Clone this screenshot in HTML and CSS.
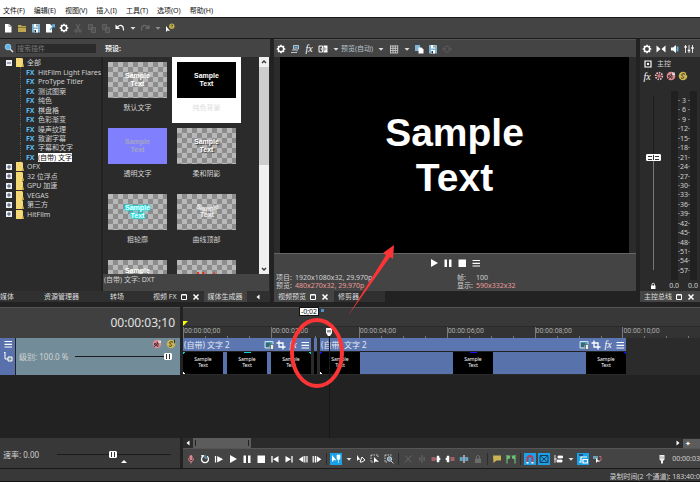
FILE: index.html
```html
<!DOCTYPE html>
<html lang="zh-CN">
<head>
    <meta charset="UTF-8">
    <meta name="viewport" content="width=device-width, initial-scale=1.0">
    <title>视频编辑</title>
    <link rel="stylesheet" href="styles.css">
</head>
<body>
    <svg class="sprite" aria-hidden="true">
        <symbol id="new" viewBox="0 0 10 10"><path d="M2 1h4l2.500 2.500V9.500H2z" fill="#fff"/><path d="M6 1v2.500h2.500" fill="none" stroke="#888" stroke-width=".7"/></symbol>
        <symbol id="open" viewBox="0 0 10 10"><path d="M1 2h3l1 1h4v6H1z" fill="#bfa650"/><path d="M1 4.500h8" stroke="#7d6b2d" stroke-width=".8"/></symbol>
        <symbol id="save" viewBox="0 0 10 10"><path d="M1 1h8v8.500H1z" fill="#7fb6d6"/><path d="M3 1h4v3.500H3zM3 6h4v3.500H3z" fill="#fff"/><path d="M5.500 1.500h1v2h-1zM3.500 7h1.500v2.500H3.500z" fill="#333"/></symbol>
        <symbol id="render" viewBox="0 0 10 10"><path d="M1 1h4l2 2v6.500H1z" fill="#fff"/><path d="M5 7l4-5M7 2h2.500v2.500" stroke="#62b5e5" stroke-width="1.300" fill="none"/></symbol>
        <symbol id="gear" viewBox="0 0 10 10"><circle cx="5" cy="5" r="2.700" fill="none" stroke="#fff" stroke-width="1.500"/><path d="M5 .7v1.600M5 7.700v1.600M.7 5h1.600M7.700 5h1.600M2 2l1 1M7 7l1 1M8 2L7 3M3 7L2 8" stroke="#fff" stroke-width="1.500"/></symbol>
        <symbol id="cut" viewBox="0 0 10 10"><path d="M3 1l3.500 6M7 1L3.500 7" stroke="#666" fill="none"/><circle cx="3" cy="8" r="1.200" fill="none" stroke="#666"/><circle cx="7" cy="8" r="1.200" fill="none" stroke="#666"/></symbol>
        <symbol id="copy-dim" viewBox="0 0 10 10"><path d="M1.500 1.500h4v5h-4zM4.500 4.500h4v5h-4z" fill="#505050" stroke="#666" stroke-width=".8"/></symbol>
        <symbol id="copy" viewBox="0 0 10 10"><path d="M1 1h5v6H1z" fill="#7fb6d6"/><path d="M4.500 3.500h3L9.500 5.500v4h-5z" fill="#fff"/></symbol>
        <symbol id="undo" viewBox="0 0 10 10"><path d="M2.500 4c3-3 6-1.500 6 2.500v1" fill="none" stroke="#fff" stroke-width="1.200"/><path d="M.5 1.500V6H5z" fill="#fff"/></symbol>
        <symbol id="redo" viewBox="0 0 10 10"><path d="M7.500 4c-3-3-6-1.500-6 2.500v1" fill="none" stroke="#6a6a6a" stroke-width="1.200"/><path d="M9.500 1.500V6H5z" fill="#6a6a6a"/></symbol>
        <symbol id="caret" viewBox="0 0 10 10"><path d="M2.500 4h5L5 6.800z" fill="#ddd"/></symbol>
        <symbol id="help" viewBox="0 0 10 10"><path d="M1 3v6l1.500-1.500L5 8z" fill="#fff"/><circle cx="6.800" cy="3.200" r="2.700" fill="#c6b04f"/><path d="M6 2.600c.2-1.200 1.800-.9 1.600.1-.1.600-.8.500-.8 1.100M6.800 4.500v.6" stroke="#333" stroke-width=".7" fill="none"/></symbol>
        <symbol id="search" viewBox="0 0 10 10"><path d="M5.800 5.800L9 9" stroke="#ddd" stroke-width="1.500"/><circle cx="4" cy="4" r="2.900" fill="#62b5e5" stroke="#9fd4f2" stroke-width=".8"/></symbol>
        <symbol id="output" viewBox="0 0 10 10"><path d="M3.500 1.500h5v3.500h-5zM2 6h4M1 8.500h6M7 5.500v2" fill="none" stroke="#b9c9d4"/><path d="M4.500 2.500h3v1.500h-3z" fill="#62b5e5"/></symbol>
        <symbol id="split" viewBox="0 0 10 10"><path d="M1 2h3.500v6H1z" fill="none" stroke="#fff"/><path d="M5.500 1.500H9.500v7h-4z" fill="#fff"/><path d="M2 5l2-1.500v3zM8.500 5l-2-1.500v3z" fill="#fff" stroke="#333" stroke-width=".4"/></symbol>
        <symbol id="grid" viewBox="0 0 10 10"><path d="M1 2h8M1 4.300h8M1 6.600h8M1 9h8M1.500 1.500V9M4 1.500V9M6.300 1.500V9M8.700 1.500V9" stroke="#ccc" stroke-width=".9"/></symbol>
        <symbol id="sync-dim" viewBox="0 0 10 10"><path d="M2 5c0-4 6-4 6 0M8 5c0 4-6 4-6 0M0 5h4M6 5h4" fill="none" stroke="#5c5c5c"/></symbol>
        <symbol id="play" viewBox="0 0 10 10"><path d="M2 1v8l7-4z" fill="#fff"/></symbol>
        <symbol id="pause" viewBox="0 0 10 10"><path d="M1.500 1.500h2.500v7.500H1.500zM6 1.500h2.500v7.500H6z" fill="#fff"/></symbol>
        <symbol id="stop" viewBox="0 0 10 10"><path d="M1.500 1.500H9V9H1.500z" fill="#fff"/></symbol>
        <symbol id="menu" viewBox="0 0 10 10"><path d="M1.500 2.500h7.500M1.500 5.300h7.500M1.500 8h7.500" stroke="#fff" stroke-width="1.200"/></symbol>
        <symbol id="bowtie" viewBox="0 0 10 10"><path d="M.5 1.500L4.500 5l-4 3.500zM9.500 1.500L5.500 5l4 3.500z" fill="#fff"/></symbol>
        <symbol id="speaker" viewBox="0 0 10 10"><path d="M1 3.500h2L6 1v8L3 6.500H1z" fill="#fff"/><path d="M7.500 2.500v5" stroke="#62b5e5" stroke-width="1.800"/></symbol>
        <symbol id="mixer" viewBox="0 0 10 10"><path d="M1.500 1v8M5 1v8M8.500 1v8" stroke="#ddd"/><path d="M.3 3h2.500M3.700 6.500h2.600M7.200 4h2.500" stroke="#fff" stroke-width="1.500"/></symbol>
        <symbol id="bus" viewBox="0 0 10 10"><path d="M2 2h6v6H2z" fill="none" stroke="#fff" stroke-width="1.200"/><path d="M4 4h2v2H4z" fill="#fff"/></symbol>
        <symbol id="auto" viewBox="0 0 10 10"><circle cx="5" cy="5" r="3.300" fill="none" stroke="#e8b6bb" stroke-width="1.800" stroke-dasharray="1.500 1"/><circle cx="5" cy="5" r="1.800" fill="#d5727b"/></symbol>
        <symbol id="mute" viewBox="0 0 10 10"><circle cx="5" cy="5" r="4.300" fill="#dd8a92"/><path d="M2.500 4.500h1.500l2-2v5l-2-1.500H2.500zM2 8L8 2" stroke="#402b2d" fill="none" stroke-width=".9"/><path d="M6 1.500h3v2.500H6z" fill="#fff" opacity=".7"/></symbol>
        <symbol id="solo" viewBox="0 0 10 10"><circle cx="5" cy="5" r="4.300" fill="#c9b355"/><path d="M7 3.500C5 1.500 2.500 3.500 4.500 5S5.500 8 3 7M8.500.8v3.500" stroke="#3e381d" fill="none"/></symbol>
        <symbol id="lock" viewBox="0 0 10 10"><path d="M3 4.500h4.500V8H3z" fill="#fff"/><path d="M4 5V3.500a1.200 1.200 0 0 1 2.500 0V5" fill="none" stroke="#fff" stroke-width=".8"/></symbol>
        <symbol id="restore" viewBox="0 0 10 10"><path d="M2.500 3h5v4.500h-5zM2.500 2.500h5" fill="none" stroke="#fff"/></symbol>
        <symbol id="close" viewBox="0 0 10 10"><path d="M2.500 2.500l5 5M7.500 2.500l-5 5" stroke="#fff" stroke-width="1.500"/></symbol>
        <symbol id="left" viewBox="0 0 10 10"><path d="M6.500 2.500v5L3.500 5z" fill="#fff"/></symbol>
        <symbol id="right" viewBox="0 0 10 10"><path d="M3.500 2.500v5l3-2.500z" fill="#fff"/></symbol>
        <symbol id="folder" viewBox="0 0 8 9"><path d="M0 0h6l1 1v5l1 3H0z" fill="#f5d876"/><path d="M7 5l1 4H6z" fill="#c09a34"/></symbol>
        <symbol id="plus" viewBox="0 0 6 6"><path d="M0 0h6v6H0z" fill="#eee"/><path d="M1 3h4M3 1v4" stroke="#34437c" stroke-width=".9"/></symbol>
        <symbol id="minus" viewBox="0 0 6 6"><path d="M0 0h6v6H0z" fill="#eee"/><path d="M1 3h4" stroke="#34437c" stroke-width=".9"/></symbol>
        <symbol id="make-child" viewBox="0 0 10 10"><path d="M2 0v5M1 1l1-1M2 7h3M2 5v2" fill="none" stroke="#fff"/><path d="M5 5h4v4H5z" fill="#748f9b" stroke="#fff"/></symbol>
        <symbol id="media" viewBox="0 0 10 10"><path d="M1 1.500h8v6.500H1z" fill="#4d9aa8" stroke="#cde"/><path d="M2 4h4M2 6h3" stroke="#234"/><path d="M6.500 4.500h3v5h-3z" fill="#eee" stroke="#333" stroke-width=".5"/></symbol>
        <symbol id="crop" viewBox="0 0 10 10"><path d="M3 .5V7h6.500M.5 3H7v6.500" fill="none" stroke="#fff" stroke-width="1.300"/></symbol>
        <symbol id="mic" viewBox="0 0 10 10"><rect x="3.500" y="1" width="3" height="5" rx="1.500" fill="#e2868e"/><path d="M2.500 4.500c0 4 5 4 5 0M5 7.500v2" stroke="#e2868e" fill="none"/></symbol>
        <symbol id="loop" viewBox="0 0 10 10"><path d="M3 2.300a3.500 3.500 0 1 0 4 0" fill="none" stroke="#fff" stroke-width="1.300"/><path d="M1 1l3.500.3L2.500 4z" fill="#fff"/><path d="M5 1v3h2.500" stroke="#62b5e5" fill="none"/></symbol>
        <symbol id="play-start" viewBox="0 0 10 10"><path d="M1.500 2v6.500" stroke="#fff" stroke-width="1.200"/><path d="M3.800 3v4.500l4-2.200z" stroke="#fff" stroke-width="1.200" fill="#fff"/></symbol>
        <symbol id="to-start" viewBox="0 0 10 10"><path d="M2 2v6.500" stroke="#fff" stroke-width="1.300"/><path d="M8.500 2v6.500L3 5.200z" fill="#fff"/></symbol>
        <symbol id="to-end" viewBox="0 0 10 10"><path d="M8 2v6.500" stroke="#fff" stroke-width="1.300"/><path d="M1.500 2v6.500L7 5.200z" fill="#fff"/></symbol>
        <symbol id="step-back" viewBox="0 0 10 10"><path d="M6.800 2v6.500M9 2v6.500" stroke="#fff" stroke-width="1.200"/><path d="M5.500 2v6.500L.8 5.200z" fill="#fff"/></symbol>
        <symbol id="step-next" viewBox="0 0 10 10"><path d="M1.200 2v6.500M3.400 2v6.500" stroke="#fff" stroke-width="1.200"/><path d="M4.700 2v6.500l4.700-3.300z" fill="#fff"/></symbol>
        <symbol id="edit-tool" viewBox="0 0 10 10"><path d="M1 1v7l2-2 2.500.5z" fill="#fff"/><path d="M6 1h3v4L7.500 6 6 5zM7.500 6v3" fill="#fff" stroke="#fff" stroke-width=".6"/></symbol>
        <symbol id="env-tool" viewBox="0 0 10 10"><path d="M1 1v6l1.500-1.500 2 .5z" fill="#fff"/><path d="M4 8l2-5 3 3-3 2z" fill="none" stroke="#fff"/></symbol>
        <symbol id="select-tool" viewBox="0 0 10 10"><path d="M1 1h7v3M1 1v7h3" fill="none" stroke="#ccc" stroke-dasharray="1.500 1"/><path d="M4 3v6l1.500-1.500L9 8z" fill="#fff"/></symbol>
        <symbol id="zoom-tool" viewBox="0 0 10 10"><path d="M1 1h7M1 1v7h3" fill="none" stroke="#ccc" stroke-dasharray="1.500 1"/><circle cx="5.500" cy="5" r="2.200" fill="#6f9cb3" stroke="#ccc"/><path d="M7 7l2.500 2.500" stroke="#ccc"/></symbol>
        <symbol id="delete-dim" viewBox="0 0 10 10"><path d="M2 1.500l6.500 7M8.500 1.500L2 8.500" stroke="#666"/></symbol>
        <symbol id="trim-dim" viewBox="0 0 10 10"><path d="M5 1v8" stroke="#666"/><path d="M2 3h1.500v4H2zM6.500 3H8v4H6.500z" fill="#5d5d5d"/></symbol>
        <symbol id="trim-start" viewBox="0 0 10 10"><path d="M.5 3h4v4h-4z" fill="#a45f67"/><path d="M6 2h2v6H6zM8 3.500L9.500 5 8 6.500M4.500 5H6" fill="#fff" stroke="#fff" stroke-width=".5"/></symbol>
        <symbol id="trim-end" viewBox="0 0 10 10"><path d="M5.500 3h4v4h-4z" fill="#a45f67"/><path d="M2 2h2v6H2zM2 3.500L.5 5 2 6.500" fill="#fff" stroke="#fff" stroke-width=".5"/></symbol>
        <symbol id="split-clip" viewBox="0 0 10 10"><path d="M5 1v8" stroke="#fff"/><path d="M.8 3h3v4h-3zM6.200 3h3v4h-3z" fill="#62a5cc"/></symbol>
        <symbol id="lock-dim" viewBox="0 0 10 10"><path d="M2 4.500h6V9H2z" fill="#6c6c6c"/><path d="M3.500 5V3a1.500 1.500 0 0 1 3 0v2" fill="none" stroke="#6c6c6c"/></symbol>
        <symbol id="marker" viewBox="0 0 10 10"><path d="M1 1.500h8v5H4.500L1.500 9z" fill="#c9b355"/></symbol>
        <symbol id="region" viewBox="0 0 10 10"><path d="M1 1v8.500M9 1v8.500" stroke="#6dbf75" stroke-width="1.200"/><path d="M1 1.500h3.500L3.500 5H1zM9 1.500H5.500L6.500 5H9z" fill="#6dbf75"/></symbol>
        <symbol id="magnet" viewBox="0 0 10 10"><path d="M2.500 9V4.500a2.500 2.500 0 0 1 5 0V9" fill="none" stroke="#b93a55" stroke-width="2"/><path d="M1.500 8h2v1.500h-2zM6.500 8h2v1.500h-2z" fill="#fff"/></symbol>
        <symbol id="fade" viewBox="0 0 10 10"><path d="M1 1.500h8v7H1zM1 1.500l8 7M9 1.500l-8 7" fill="none" stroke="#17395a"/></symbol>
        <symbol id="ripple" viewBox="0 0 10 10"><path d="M2 1v8M1 5h3M5 2h4.500v2H5zM4 6h5v2H4z" fill="#fff" stroke="#fff" stroke-width=".8"/></symbol>
        <symbol id="envelope" viewBox="0 0 10 10"><path d="M1 8h2V3h6M5 5.500h4.500v3.500H5z" fill="none" stroke="#fff" stroke-width="1.200"/><path d="M1 1h4" stroke="#223" stroke-width="1.200"/></symbol>
        <symbol id="group" viewBox="0 0 10 10"><path d="M1 2h5v3H1z" fill="#6f9cb3"/><path d="M4 4v5l1.500-1.500L8 8z" fill="#fff"/><path d="M7 2.500h2v4H7" fill="none" stroke="#c06771"/></symbol>
        <symbol id="pin" viewBox="0 0 10 10"><path d="M2.500 1h5v4.500L6 7v2.500H4V7L2.500 5.500z" fill="#eee"/><path d="M4 2.500v2M6 2.500v2" stroke="#555" stroke-width=".6"/></symbol>
    </svg>

    <nav class="menubar">
        <button>文件(F)</button>
        <button>编辑(E)</button>
        <button>视图(V)</button>
        <button>插入(I)</button>
        <button>工具(T)</button>
        <button>选项(O)</button>
        <button>帮助(H)</button>
    </nav>

    <div class="toolbar main-toolbar">
        <button aria-label="新建"><svg><use href="#new"/></svg></button>
        <button aria-label="打开"><svg><use href="#open"/></svg></button>
        <button aria-label="保存"><svg><use href="#save"/></svg></button>
        <button aria-label="渲染"><svg><use href="#render"/></svg></button>
        <button aria-label="属性"><svg><use href="#gear"/></svg></button>
        <button aria-label="剪切"><svg><use href="#cut"/></svg></button>
        <button aria-label="复制"><svg><use href="#copy-dim"/></svg></button>
        <button aria-label="粘贴"><svg><use href="#copy-dim"/></svg></button>
        <button aria-label="撤消"><svg><use href="#undo"/></svg></button>
        <button class="narrow" aria-label="撤消列表"><svg><use href="#caret"/></svg></button>
        <button aria-label="重做"><svg><use href="#redo"/></svg></button>
        <button class="narrow dim" aria-label="重做列表"><svg><use href="#caret"/></svg></button>
        <button aria-label="帮助"><svg><use href="#help"/></svg></button>
    </div>

    <main class="workspace">
        <section class="dock generators">
            <div class="panel">
                <div class="panel-head">
                    <label for="plugin-search" aria-label="搜索插件"><svg><use href="#search"/></svg></label>
                    <input id="plugin-search" type="text" placeholder="搜索插件">
                    <span class="preset-title">预设:</span>
                </div>
                <div class="browser">
                    <ul class="tree">
                        <li><svg class="expander"><use href="#minus"/></svg><svg class="folder"><use href="#folder"/></svg>全部</li>
                        <li class="child"><b>FX</b><span>HitFilm Light Flares</span></li>
                        <li class="child"><b>FX</b><span>ProType Titler</span></li>
                        <li class="child"><b>FX</b><span>测试图案</span></li>
                        <li class="child"><b>FX</b><span>纯色</span></li>
                        <li class="child"><b>FX</b><span>棋盘格</span></li>
                        <li class="child"><b>FX</b><span>色彩渐变</span></li>
                        <li class="child"><b>FX</b><span>噪声纹理</span></li>
                        <li class="child"><b>FX</b><span>致谢字幕</span></li>
                        <li class="child"><b>FX</b><span>字幕和文字</span></li>
                        <li class="child"><b>FX</b><span class="chosen">(自带) 文字</span></li>
                        <li><svg class="expander"><use href="#plus"/></svg><svg class="folder"><use href="#folder"/></svg>OFX</li>
                        <li><svg class="expander"><use href="#plus"/></svg><svg class="folder"><use href="#folder"/></svg>32 位浮点</li>
                        <li><svg class="expander"><use href="#plus"/></svg><svg class="folder"><use href="#folder"/></svg>GPU 加速</li>
                        <li><svg class="expander"><use href="#plus"/></svg><svg class="folder"><use href="#folder"/></svg>VEGAS</li>
                        <li><svg class="expander"><use href="#plus"/></svg><svg class="folder"><use href="#folder"/></svg>第三方</li>
                        <li><svg class="expander"><use href="#plus"/></svg><svg class="folder"><use href="#folder"/></svg>HitFilm</li>
                    </ul>
                    <div class="presets">
                        <div class="preset-list">
                            <div class="preset"><div class="thumb">Sample<br>Text</div>默认文字</div>
                            <div class="preset selected"><div class="thumb solid">Sample<br>Text</div>纯色背景</div>
                            <div class="preset"><div class="thumb violet">Sample<br>Text</div>透明文字</div>
                            <div class="preset"><div class="thumb shadow">Sample<br>Text</div>柔和阴影</div>
                            <div class="preset"><div class="thumb glow">Sample<br>Text</div>粗轮廓</div>
                            <div class="preset">
                                <div class="thumb">
                                    <svg class="curved" viewBox="0 0 59 36">
                                        <path id="arc" d="M15 12Q30 22 46 12" fill="none"/>
                                        <text><textPath href="#arc" startOffset="50%" text-anchor="middle">Sample</textPath></text>
                                        <text x="30" y="23" text-anchor="middle">Text</text>
                                    </svg>
                                </div>
                                曲线顶部
                            </div>
                            <div class="preset"><div class="thumb tall">Sample</div></div>
                            <div class="preset"><div class="thumb hot">Hot</div></div>
                        </div>
                        <div class="scrollbar">
                            <svg viewBox="0 0 10 10"><path d="M3 6l2-2 2 2" fill="none" stroke="#333" stroke-width="1.300"/></svg>
                            <div class="scroll-thumb"></div>
                            <svg viewBox="0 0 10 10"><path d="M3 4l2 2 2-2" fill="none" stroke="#333" stroke-width="1.300"/></svg>
                        </div>
                        <div class="preset-info">(自带) 文字: DXT</div>
                    </div>
                </div>
            </div>
            <div class="tabs full">
                <button class="tab-media"><span>媒体</span></button>
                <button class="tab-explorer">资源管理器</button>
                <button class="tab-transition">转场</button>
                <button class="tab-fx">视频 FX <svg><use href="#restore"/></svg><svg><use href="#close"/></svg></button>
                <button class="active">媒体生成器</button>
                <button class="tab-arrow" aria-label="向左"><svg><use href="#left"/></svg></button>
            </div>
        </section>

        <section class="dock preview">
            <div class="panel">
                <div class="toolbar">
                    <button aria-label="属性"><svg><use href="#gear"/></svg></button>
                    <button aria-label="外部监视器"><svg><use href="#output"/></svg></button>
                    <button class="fx" aria-label="效果">fx</button>
                    <button aria-label="拆分视图"><svg><use href="#split"/></svg></button>
                    <button class="narrow" aria-label="拆分选项"><svg><use href="#caret"/></svg></button>
                    <button class="quality">预览(自动) <svg><use href="#caret"/></svg></button>
                    <button aria-label="网格"><svg><use href="#grid"/></svg></button>
                    <button class="narrow" aria-label="网格选项"><svg><use href="#caret"/></svg></button>
                    <button aria-label="复制快照"><svg><use href="#copy"/></svg></button>
                    <button aria-label="保存快照"><svg><use href="#save"/></svg></button>
                    <button aria-label="同步"><svg><use href="#sync-dim"/></svg></button>
                </div>
                <div class="screen"><p>Sample<br>Text</p></div>
                <div class="monitor">
                    <div class="monitor-controls">
                        <button aria-label="播放"><svg><use href="#play"/></svg></button>
                        <button aria-label="暂停"><svg><use href="#pause"/></svg></button>
                        <button aria-label="停止"><svg><use href="#stop"/></svg></button>
                        <button aria-label="菜单"><svg><use href="#menu"/></svg></button>
                    </div>
                    <div class="monitor-info">
                        <span>项目:</span><span>1920x1080x32, 29.970p</span><span>帧:</span><span>100</span>
                        <span>预览:</span><span class="warn">480x270x32, 29.970p</span><span>显示:</span><span class="warn">590x332x32</span>
                    </div>
                </div>
            </div>
            <div class="tabs">
                <button class="active">视频预览 <svg><use href="#restore"/></svg><svg><use href="#close"/></svg></button>
                <button class="tab-trimmer">修剪器</button>
            </div>
        </section>

        <section class="dock master">
            <div class="panel">
                <div class="toolbar">
                    <button aria-label="属性"><svg><use href="#gear"/></svg></button>
                    <button aria-label="缩混"><svg><use href="#bowtie"/></svg></button>
                    <button aria-label="调低音量"><svg><use href="#speaker"/></svg></button>
                    <button aria-label="调音台"><svg><use href="#mixer"/></svg></button>
                </div>
                <div class="bus-name"><svg><use href="#bus"/></svg>主控</div>
                <div class="bus-tools">
                    <button class="fx" aria-label="效果">fx</button>
                    <button aria-label="自动化"><svg><use href="#auto"/></svg></button>
                    <button aria-label="静音"><svg><use href="#mute"/></svg></button>
                    <button aria-label="独奏"><svg><use href="#solo"/></svg></button>
                </div>
                <div class="meters">
                    <input class="fader" type="range" min="0" max="100" value="65" aria-label="主控音量">
                    <div class="level"></div>
                    <ol class="scale">
                        <li>3</li><li>6</li><li>9</li><li>12</li><li>15</li><li>18</li><li>21</li><li>24</li><li>27</li><li>30</li>
                        <li>33</li><li>36</li><li>39</li><li>42</li><li>45</li><li>48</li><li>51</li><li>54</li><li>57</li>
                    </ol>
                    <div class="level"></div>
                </div>
                <div class="readout"><svg><use href="#lock"/></svg><span>0.0</span><span>0.0</span></div>
            </div>
            <div class="tabs full">
                <button class="active">主控总线 <svg><use href="#restore"/></svg><svg><use href="#close"/></svg></button>
            </div>
        </section>
    </main>

    <section class="timeline">
        <div class="track-column">
            <div class="timecode">00:00:03;10</div>
            <div class="track-head">
                <div class="track-handle">
                    <svg><use href="#menu"/></svg>
                    <svg><use href="#make-child"/></svg>
                </div>
                <div class="track-body">
                    <div class="track-buttons">
                        <button aria-label="静音"><svg><use href="#mute"/></svg></button>
                        <button aria-label="独奏"><svg><use href="#solo"/></svg></button>
                    </div>
                    <div class="track-level">
                        <label for="level">级别: 100.0 %</label>
                        <input id="level" type="range" min="0" max="100" value="100">
                    </div>
                </div>
            </div>
            <div class="rate">
                <label for="rate">速率: 0.00</label>
                <input id="rate" type="range" min="0" max="100" value="49">
                <span class="rate-mark"></span>
            </div>
        </div>

        <div class="track-area">
            <div class="marker-bar"><span class="offset-tip">-0;02</span></div>
            <div class="ruler">
                <span>00:00:00;00</span>
                <span>00:00:02;00</span>
                <span>00:00:04;00</span>
                <span>00:00:06;00</span>
                <span>00:00:08;00</span>
                <span>00:00:10;00</span>
            </div>
            <div class="lane">
                <div class="clip first">
                    <div class="clip-head">
                        <span>(自带) 文字 2</span>
                        <svg><use href="#media"/></svg><svg><use href="#crop"/></svg><i class="fx">fx</i><svg><use href="#menu"/></svg>
                    </div>
                    <div class="frames"><span>Sample<br>Text</span><span>Sample<br>Text</span><span>Sample<br>Text</span></div>
                </div>
                <div class="clip sliver">
                    <div class="clip-head"></div>
                    <div class="frames"></div>
                </div>
                <div class="clip second">
                    <div class="clip-head">
                        <span>(自带) 文字 2</span>
                        <svg><use href="#media"/></svg><svg><use href="#crop"/></svg><i class="fx">fx</i><svg><use href="#menu"/></svg>
                    </div>
                    <div class="frames"><span>Sample<br>Text</span><span>Sample<br>Text</span><span>Sample<br>Text</span></div>
                </div>
            </div>
            <div class="playhead"><svg viewBox="0 0 8 10"><path d="M1 1h6v5L5 9H3L1 6z" fill="#fff"/><path d="M3 3v2.500M5 3v2.500" stroke="#333"/></svg></div>
            <div class="empty-lane"></div>
            <div class="h-scroll">
                <svg><use href="#left"/></svg>
                <div class="h-thumb"></div>
                <svg class="push"><use href="#right"/></svg>
                <div class="h-zoom">✦</div>
            </div>
            <div class="toolbar transport">
                <button aria-label="录制"><svg><use href="#mic"/></svg></button>
                <button aria-label="循环播放"><svg><use href="#loop"/></svg></button>
                <button aria-label="从头播放"><svg><use href="#play-start"/></svg></button>
                <button aria-label="播放"><svg><use href="#play"/></svg></button>
                <button aria-label="暂停"><svg><use href="#pause"/></svg></button>
                <button aria-label="停止"><svg><use href="#stop"/></svg></button>
                <button aria-label="转到开始"><svg><use href="#to-start"/></svg></button>
                <button aria-label="转到结尾"><svg><use href="#to-end"/></svg></button>
                <button aria-label="上一帧"><svg><use href="#step-back"/></svg></button>
                <button aria-label="下一帧"><svg><use href="#step-next"/></svg></button>
                <hr>
                <button class="on" aria-label="编辑工具"><svg><use href="#edit-tool"/></svg></button>
                <button class="narrow" aria-label="工具列表"><svg><use href="#caret"/></svg></button>
                <button aria-label="包络工具"><svg><use href="#env-tool"/></svg></button>
                <button aria-label="选择工具"><svg><use href="#select-tool"/></svg></button>
                <button aria-label="缩放工具"><svg><use href="#zoom-tool"/></svg></button>
                <hr>
                <button aria-label="删除"><svg><use href="#delete-dim"/></svg></button>
                <button aria-label="修剪"><svg><use href="#trim-dim"/></svg></button>
                <button aria-label="修剪开头"><svg><use href="#trim-start"/></svg></button>
                <button aria-label="修剪结尾"><svg><use href="#trim-end"/></svg></button>
                <button aria-label="拆分"><svg><use href="#split-clip"/></svg></button>
                <button aria-label="锁定"><svg><use href="#lock-dim"/></svg></button>
                <hr>
                <button aria-label="标记"><svg><use href="#marker"/></svg></button>
                <button aria-label="区域"><svg><use href="#region"/></svg></button>
                <hr>
                <button class="on" aria-label="吸附"><svg><use href="#magnet"/></svg></button>
                <button class="on" aria-label="自动交叉淡化"><svg><use href="#fade"/></svg></button>
                <button aria-label="自动跟进"><svg><use href="#ripple"/></svg></button>
                <button class="narrow" aria-label="跟进选项"><svg><use href="#caret"/></svg></button>
                <button class="on" aria-label="锁定包络"><svg><use href="#envelope"/></svg></button>
                <button aria-label="忽略分组"><svg><use href="#group"/></svg></button>
                <div class="cursor-time"><svg><use href="#pin"/></svg><span>00:00:03</span></div>
            </div>
        </div>
    </section>

    <footer class="statusbar">录制时间(2 个通道): 183:40:0</footer>

    <svg class="annotation" viewBox="0 0 700 482" aria-hidden="true">
        <ellipse cx="317" cy="353" rx="25" ry="33"/>
        <path d="M348 316L386 255 383 253 394 245 393 259 390 257z"/>
    </svg>
</body>
</html>
```

FILE: styles.css
```css
* {
    box-sizing: border-box;
}

body {
    margin: 0;
    min-height: 100vh;
    display: flex;
    flex-direction: column;
    position: relative;
    overflow: hidden;
    background-color: #222;
    color: #d2d2d2;
    font-family: "Noto Sans", "Noto Sans CJK SC", sans-serif;
    font-size: 7px;
    line-height: 9px;
}

ul, ol, p {
    margin: 0;
    padding: 0;
    list-style: none;
}

button {
    display: flex;
    align-items: center;
    justify-content: center;
    padding: 0;
    border: none;
    background: none;
    color: inherit;
    font: inherit;
    white-space: nowrap;
}

svg {
    width: 10px;
    height: 10px;
    flex: none;
    display: block;
}

.sprite {
    display: none;
}

.toolbar .fx,
.bus-tools .fx,
.clip-head .fx {
    font-family: "Liberation Serif", serif;
    font-style: italic;
    font-size: 10px;
    color: #fff;
}

/* menu and toolbars */
.menubar {
    display: flex;
    gap: 9px;
    height: 17px;
    padding: 3px 3px 0;
    background-color: #fff;
    color: #111;
}

.toolbar {
    display: flex;
    align-items: center;
    height: 18px;
    background-color: #444;
}

.toolbar button {
    width: 14px;
    height: 12px;
    flex: none;
}

.toolbar .narrow {
    width: 11px;
}

.toolbar .dim {
    opacity: 0.5;
}

.toolbar .on {
    width: 12px;
    margin: 0 1px;
    background-color: #1ba1e8;
}

.toolbar hr {
    flex: none;
    width: 1px;
    height: 12px;
    margin: 0 2px;
    border: none;
    background-color: #2c2c2c;
}

.main-toolbar {
    height: 22px;
    padding-left: 1px;
    border-top: 1px solid #1a1a1a;
    border-bottom: 1px solid #1a1a1a;
}

/* upper docks */
.workspace {
    flex: 1;
    min-height: 267px;
    display: grid;
    grid-template-columns: 270px 1fr 60px;
    gap: 4px;
    padding-bottom: 5px;
}

.dock {
    min-width: 0;
    display: flex;
    flex-direction: column;
}

.panel {
    flex: 1;
    display: flex;
    flex-direction: column;
    background-color: #2b2b2b;
}

.panel-head {
    display: flex;
    align-items: center;
    height: 18px;
    padding-left: 4px;
    background-color: #444;
}

.panel-head input {
    width: 80px;
    height: 9px;
    margin-left: 2px;
    padding: 0 1px;
    border: none;
    background-color: #2b2b2b;
    color: #ddd;
    font: inherit;
}

.panel-head input::placeholder {
    color: #777;
}

.preset-title {
    margin-left: 9px;
    color: #eee;
    font-weight: bold;
}

.browser {
    flex: 1;
    display: grid;
    grid-template-columns: 101px 1fr;
    gap: 2px;
    background-color: #222;
}

.tree {
    display: grid;
    grid-template-rows: repeat(17, 1fr);
    align-self: stretch;
    padding: 1px 0 72px 6px;
    background-color: #2b2b2b;
}

.tree li {
    display: flex;
    align-items: center;
    min-height: 0;
    white-space: nowrap;
}

.tree .expander {
    width: 6px;
    height: 6px;
    margin-right: 4px;
}

.tree .folder {
    width: 8px;
    height: 9px;
    margin-right: 3px;
}

.tree .child {
    margin-left: 14px;
    border-left: 1px dotted #555;
    padding-left: 5px;
}

.tree b {
    width: 12px;
    color: #58bdf0;
}

.tree .chosen {
    background-color: #fff;
    color: #111;
}

.presets {
    display: grid;
    grid-template-columns: 1fr 10px;
    grid-template-rows: 1fr 17px;
    padding-right: 1px;
    background-color: #2b2b2b;
}

.preset-list {
    height: 0;
    min-height: 100%;
    display: grid;
    grid-template-columns: 69px 69px;
    grid-auto-rows: 66px;
    overflow: hidden;
}

.preset {
    padding: 5px;
    text-align: center;
}

.preset.selected {
    background-color: #fff;
    color: #ddd;
}

.thumb {
    display: flex;
    align-items: center;
    justify-content: center;
    height: 36px;
    margin-bottom: 5px;
    background: repeating-conic-gradient(#8c8c8c 0 25%, #b8b8b8 0 50%) 0 0 / 10px 10px;
    color: #fff;
    font-family: "Liberation Sans", sans-serif;
    font-size: 7px;
    font-weight: bold;
    line-height: 8px;
}

.thumb.solid {
    background: #000;
}

.thumb.violet {
    background: #8080ff;
    color: #a5a5c4;
}

.thumb.shadow {
    text-shadow: 1px 1px 1px #333;
}

.thumb.glow {
    text-shadow: 0 0 1px #0ee, 0 0 1px #0ee, 0 0 2px #0ee, 0 0 2px #0ee, 0 0 2px #0ee, 0 0 2px #0ee;
}

.thumb.tall {
    align-items: flex-start;
    padding-top: 7px;
}

.thumb.hot {
    align-items: flex-start;
    padding-top: 13px;
    color: #f20;
    font-size: 12px;
}

.curved {
    width: 59px;
    height: 36px;
    fill: #eee;
    font-size: 7px;
}

.scrollbar {
    display: flex;
    flex-direction: column;
    background-color: #f0f0f0;
}

.scroll-thumb {
    height: 98px;
    margin-bottom: auto;
    background-color: #cdcdcd;
}

.preset-info {
    grid-column: 1 / -1;
    padding: 1px;
    background-color: #444;
}

/* dock tabs */
.tabs {
    display: flex;
    height: 11px;
}

.tabs.full {
    background-color: #303030;
}

.tabs button {
    padding: 0 3px;
    background-color: #303030;
    color: #ddd;
}

.tabs .active {
    padding: 0 4px;
    background-color: #444;
}

.tabs .tab-media {
    width: 14px;
    overflow: hidden;
    justify-content: flex-end;
    padding: 0;
}

.tabs .tab-explorer {
    margin-left: 27px;
}

.tabs .tab-transition {
    margin-left: 25px;
}

.tabs .tab-fx {
    margin-left: 23px;
}

.tabs .tab-arrow {
    padding: 0 4px;
}

.tabs .tab-trimmer {
    padding: 0 26px 0 4px;
}

.tabs svg {
    margin-left: 2px;
}

/* video preview */
.preview .toolbar {
    border-top: 1px solid #555;
}

.toolbar .quality {
    width: auto;
    color: #b9c4cc;
}

.quality svg {
    margin: 0 1px 0 3px;
}

.screen {
    flex: 1;
    display: grid;
    place-items: center;
    margin: 0 7px 0 6px;
    background-color: #000;
    color: #fff;
    font: bold 39px/45px "Liberation Sans", sans-serif;
    text-align: center;
}

.monitor {
    height: 38px;
    border-top: 1px solid #666;
    background-color: #444;
}

.monitor-controls {
    display: flex;
    justify-content: center;
    gap: 4px;
    padding: 4px 0 6px;
}

.monitor-info {
    display: grid;
    grid-template-columns: 19px 162px 19px 1fr;
    padding-left: 2px;
    line-height: 8px;
    white-space: nowrap;
}

.warn {
    color: #eb9a9a;
}

/* master bus */
.master .toolbar {
    border-top: 1px solid #555;
}

.bus-name {
    display: flex;
    gap: 4px;
    align-items: center;
    height: 13px;
    padding-left: 3px;
}

.bus-tools {
    display: flex;
    gap: 2px;
    height: 12px;
    padding-left: 2px;
}

.bus-tools button {
    width: 10px;
    height: 12px;
}

.meters {
    flex: 1;
    display: grid;
    grid-template-columns: 7px 12px 7px;
    justify-content: end;
    padding: 9px 3px 0 0;
    position: relative;
}

.level {
    background-color: #202020;
}

.scale {
    display: flex;
    flex-direction: column;
    justify-content: space-between;
    padding: 5px 0;
}

.scale li {
    display: flex;
    justify-content: space-between;
}

.scale li::before,
.scale li::after {
    content: "·";
}

.readout {
    display: flex;
    align-items: center;
    justify-content: flex-end;
    gap: 9px;
    height: 11px;
    padding-right: 2px;
}

.readout svg {
    margin-right: 2px;
}

/* sliders */
input[type="range"] {
    appearance: none;
    margin: 0;
    height: 8px;
    background: linear-gradient(#1c1c1c, #1c1c1c) center / 100% 1px no-repeat;
}

input[type="range"]::-webkit-slider-thumb {
    appearance: none;
    width: 8px;
    height: 7px;
    border: 1px solid #fff;
    border-radius: 1px;
    background: linear-gradient(90deg, #fff 1px, #333 1px 2px, #fff 2px 4px, #333 4px 5px, #fff 5px);
}

.meters .fader {
    position: absolute;
    left: 6px;
    top: 14px;
    bottom: 10px;
    width: 15px;
    height: auto;
    writing-mode: vertical-lr;
    direction: rtl;
    background: linear-gradient(#1c1c1c 35%, #777 35%) center / 1px 100% no-repeat;
}

.meters .fader::-webkit-slider-thumb {
    width: 15px;
    height: 7px;
    background:
        linear-gradient(#333, #333) center / 1px 100% no-repeat,
        linear-gradient(#333 1px, #fff 1px 3px, #333 3px 4px, transparent 4px) 1px 1px / 4px 4px no-repeat,
        linear-gradient(#333 1px, #fff 1px 3px, #333 3px 4px, transparent 4px) 8px 1px / 4px 4px no-repeat,
        #fff;
}

/* timeline */
.timeline {
    display: grid;
    grid-template-columns: 180px 1fr;
    gap: 3px;
}

.track-column {
    display: flex;
    flex-direction: column;
}

.timecode {
    height: 31px;
    padding: 6px 5px 0 0;
    border-top: 1px solid #555;
    background-color: #404040;
    color: #e2e2e2;
    font-size: 12px;
    line-height: 18px;
    text-align: right;
}

.track-head {
    display: flex;
    height: 37px;
}

.track-handle {
    width: 15px;
    padding: 1px 3px;
    background-color: #5870ab;
}

.track-handle svg {
    margin-bottom: 3px;
}

.track-body {
    flex: 1;
    margin-left: 1px;
    background-color: #728d99;
}

.track-buttons {
    display: flex;
    justify-content: flex-end;
    gap: 4px;
    padding: 1px 4px 0 0;
}

.track-level {
    display: flex;
    align-items: center;
    justify-content: space-between;
    padding: 3px 8px 0 3px;
    font-size: 8px;
}

.track-level input {
    width: 97px;
}

.rate {
    display: flex;
    align-items: center;
    gap: 18px;
    height: 30px;
    margin-top: auto;
    padding: 3px 9px 0 3px;
    background-color: #383838;
    font-size: 8px;
    white-space: nowrap;
    position: relative;
}

.rate input {
    flex: 1;
    min-width: 0;
}

.rate-mark {
    position: absolute;
    left: 121px;
    bottom: 5px;
    border: 3px solid transparent;
    border-top: none;
    border-bottom-color: #fff;
}

.track-area {
    min-width: 0;
    display: flex;
    flex-direction: column;
    position: relative;
}

.marker-bar {
    height: 19px;
    border-top: 1px solid #555;
    background-color: #383838;
    position: relative;
}

.marker-bar::after {
    content: "";
    position: absolute;
    left: 0;
    bottom: 0;
    border-top: 5px solid #ff0;
    border-right: 5px solid transparent;
}

.offset-tip {
    position: absolute;
    left: 116px;
    top: -1px;
    width: 20px;
    height: 9px;
    border: 1px solid #111;
    background-color: #fff;
    color: #111;
    line-height: 7px;
    text-align: center;
}

.offset-tip::after {
    content: "";
    position: absolute;
    left: 21px;
    top: 1px;
    width: 3px;
    height: 3px;
    background-color: #4e8fd0;
}

.ruler {
    display: flex;
    height: 12px;
    overflow: hidden;
    border-top: 1px solid #2a2a2a;
    background-color: #333;
    color: #aaa;
    font-family: Roboto, sans-serif;
}

.ruler span {
    flex: 0 0 17%;
    height: 11px;
    border-left: 1px solid #777;
    background: repeating-linear-gradient(90deg, transparent 0 21px, #777 21px 22px) 0 100% / 100% 2px no-repeat;
}

.lane {
    display: flex;
    height: 37px;
    background-color: #2b2b2b;
}

.clip {
    display: flex;
    flex-direction: column;
    flex: none;
}

.clip.first {
    width: 128px;
    margin-right: 3px;
}

.clip.sliver {
    width: 3px;
    margin-right: 3px;
}

.clip.second {
    width: 306px;
}

.clip-head {
    display: flex;
    align-items: center;
    gap: 2px;
    height: 13px;
    padding: 0 1px;
    background-color: #5b76b0;
    color: #e6eaf4;
    font-size: 8px;
}

.clip-head span {
    margin-right: auto;
    white-space: nowrap;
}

.clip-head .fx {
    width: 10px;
    text-align: center;
}

.frames {
    display: flex;
    justify-content: space-between;
    height: 23px;
    border-top: 1px solid #222;
    background-color: #5873ac;
    position: relative;
}

.frames span {
    width: 40px;
    padding-top: 4px;
    background-color: #000;
    color: #fff;
    font-size: 5px;
    line-height: 6px;
    text-align: center;
}

.frames span:first-child {
    background: linear-gradient(45deg, #fff 2px, #000 2px);
}

/* fade handles in the clip corners and on its top edge */
.first .frames {
    color: #0cd5d5;
}

.second .frames {
    color: #1010ff;
}

.frames::before {
    content: "";
    position: absolute;
    left: 0;
    right: 0;
    top: 0;
    height: 3px;
    background:
        linear-gradient(135deg, currentColor 2px, transparent 2px) left / 3px 3px no-repeat,
        linear-gradient(225deg, currentColor 2px, transparent 2px) right / 3px 3px no-repeat,
        linear-gradient(currentColor, currentColor) top / 7px 1px no-repeat;
}

.sliver .frames {
    background-color: #000;
    color: #000;
}

.playhead {
    position: absolute;
    left: 142px;
    top: 20px;
    bottom: 30px;
    width: 8px;
    background: linear-gradient(#181818, #181818) center / 1px 100% no-repeat;
}

.playhead svg {
    width: 8px;
}

.empty-lane {
    min-height: 63px;
}

.h-scroll {
    display: flex;
    align-items: center;
    height: 11px;
    background-color: #2b2b2b;
    border-bottom: 1px solid #555;
}

.h-thumb {
    width: 58px;
    height: 10px;
    border: 2px solid #5c5c5c;
    background-color: #5c5c5c;
    box-shadow: inset 1px 0 #222, inset -1px 0 #222;
}

.push {
    margin-left: auto;
}

.h-zoom {
    width: 17px;
    padding-left: 2px;
    background-color: #5c5c5c;
    color: #fff;
}

.transport {
    height: 19px;
    padding-left: 1px;
    overflow: hidden;
}

.cursor-time {
    display: flex;
    align-items: center;
    gap: 5px;
    margin-left: auto;
}

.statusbar {
    height: 14px;
    padding-top: 3px;
    border-top: 1px solid #1a1a1a;
    border-bottom: 1px solid #111;
    background-color: #383838;
    text-align: right;
    white-space: nowrap;
}

.annotation {
    position: absolute;
    left: 0;
    top: 0;
    width: 700px;
    height: 482px;
    pointer-events: none;
}

.annotation ellipse {
    fill: none;
    stroke: #fb3535;
    stroke-width: 4;
}

.annotation path {
    fill: #fb3535;
}
```
